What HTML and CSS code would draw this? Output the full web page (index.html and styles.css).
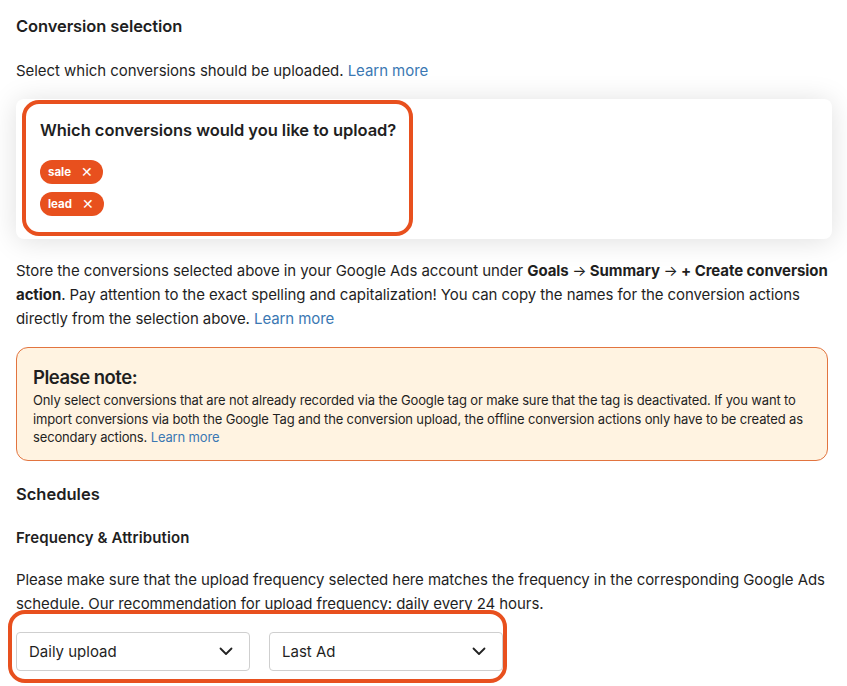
FILE: index.html
```html
<!DOCTYPE html>
<html>
<head>
<meta charset="utf-8">
<link rel="stylesheet" href="styles.css">
</head>
<body>
<div class="page">
  <h2 class="h-section">Conversion selection</h2>
  <p class="lead-p">Select which conversions should be uploaded. <a class="link">Learn more</a></p>

  <div class="card">
    <div class="mark mark-top">
      <h3 class="q">Which conversions would you like to upload?</h3>
      <div class="chips">
        <span class="chip">sale <span class="x">✕</span></span>
        <span class="chip">lead <span class="x">✕</span></span>
      </div>
    </div>
  </div>

  <p class="body-p">Store the conversions selected above in your Google Ads account under <b>Goals <span class="arr">→</span> Summary <span class="arr">→</span> + Create conversion action</b>. Pay attention to the exact spelling and capitalization! You can copy the names for the conversion actions directly from the selection above. <a class="link">Learn more</a></p>

  <div class="note">
    <div class="note-title">Please note:</div>
    <p class="note-text">Only select conversions that are not already recorded via the Google tag or make sure that the tag is deactivated. If you want to import conversions via both the Google Tag and the conversion upload, the offline conversion actions only have to be created as secondary actions. <a class="link">Learn more</a></p>
  </div>

  <h3 class="h-sched">Schedules</h3>
  <h4 class="h-freq">Frequency &amp; Attribution</h4>
  <p class="body-p freq-p">Please make sure that the upload frequency selected here matches the frequency in the corresponding Google Ads schedule. Our recommendation for upload frequency: daily every 24 hours.</p>

  <div class="mark mark-bottom">
    <div class="select"><span>Daily upload</span>
      <svg class="chev" width="14" height="9" viewBox="0 0 14 9"><path d="M1.5 1.5 L7 7 L12.5 1.5" fill="none" stroke="#222" stroke-width="1.8" stroke-linecap="round" stroke-linejoin="round"/></svg>
    </div>
    <div class="select"><span>Last Ad</span>
      <svg class="chev" width="14" height="9" viewBox="0 0 14 9"><path d="M1.5 1.5 L7 7 L12.5 1.5" fill="none" stroke="#222" stroke-width="1.8" stroke-linecap="round" stroke-linejoin="round"/></svg>
    </div>
  </div>
</div>
</body>
</html>
```

FILE: styles.css
```css
html, body {
  margin: 0;
  padding: 0;
  background: #ffffff;
}
body {
  font-family: Inter, "Liberation Sans", sans-serif;
  color: #1f1f1f;
  width: 847px;
  height: 686px;
  overflow: hidden;
}
.page {
  padding: 0 13px 0 16px;
}
.link {
  color: #3b78b3;
  text-decoration: none;
}
.h-section {
  margin: 0;
  padding-top: 14px;
  font-size: 16.5px;
  line-height: 24px;
  font-weight: 600;
  letter-spacing: -0.1px;
}
.lead-p {
  margin: 22px 0 0;
  font-size: 15px;
  line-height: 22px;
  letter-spacing: -0.05px;
}
.card {
  margin-top: 17px;
  margin-right: 2px;
  background: #fff;
  border-radius: 8px;
  box-shadow: 0 2px 28px rgba(0,0,0,0.13);
  height: 140px;
  padding: 1px 0 0 6px;
  box-sizing: border-box;
}
.mark {
  border: 4px solid #e8501e;
  border-radius: 17px;
  box-sizing: border-box;
}
.mark-top {
  width: 391px;
  height: 136px;
  padding: 14px 0 0 14px;
}
.q {
  margin: 0;
  font-size: 16.5px;
  line-height: 24px;
  font-weight: 600;
  letter-spacing: -0.05px;
}
.chips {
  margin-top: 18px;
  display: flex;
  flex-direction: column;
  align-items: flex-start;
  gap: 8px;
}
.chip {
  display: inline-flex;
  align-items: center;
  height: 24px;
  padding: 0 10px 0 8px;
  border-radius: 12px;
  background: #e8501e;
  color: #fff;
  font-size: 11.5px;
  font-weight: 700;
  gap: 10px;
}
.chip .x {
  font-size: 14px;
  font-weight: 300;
  line-height: 1;
}
.body-p {
  margin: 20px 0 0;
  font-size: 15px;
  line-height: 24px;
  letter-spacing: -0.08px;
}
.body-p b {
  font-weight: 700;
}
.body-p .arr {
  font-weight: 400;
}
.note {
  margin-top: 16px;
  margin-right: 6px;
  background: #fff3e1;
  border: 1px solid #e2743f;
  border-radius: 12px;
  padding: 17px 16px 13px 16px;
}
.note-title {
  font-size: 18.5px;
  line-height: 24px;
  font-weight: 600;
  letter-spacing: -0.5px;
  margin-bottom: 2px;
}
.note-text {
  margin: 0;
  font-size: 13px;
  line-height: 18.5px;
  letter-spacing: -0.15px;
}
.h-sched {
  margin: 22px 0 0;
  font-size: 16.5px;
  line-height: 22px;
  font-weight: 600;
  letter-spacing: 0;
}
.h-freq {
  margin: 22px 0 0;
  font-size: 15px;
  line-height: 22px;
  font-weight: 600;
  letter-spacing: 0.1px;
}
.freq-p {
  margin-top: 19px;
}
.mark-bottom {
  margin: -6px 0 0 -8px;
  width: 499px;
  height: 73px;
  display: flex;
  gap: 19px;
  padding: 18px 0 0 4px;
  position: relative;
}
.select {
  width: 234px;
  height: 39px;
  box-sizing: border-box;
  border: 1px solid #cfcfcf;
  border-radius: 4px;
  background: #fff;
  display: flex;
  align-items: center;
  justify-content: space-between;
  padding: 0 16px 0 12px;
  font-size: 15px;
}
.chev {
  display: block;
}
```
